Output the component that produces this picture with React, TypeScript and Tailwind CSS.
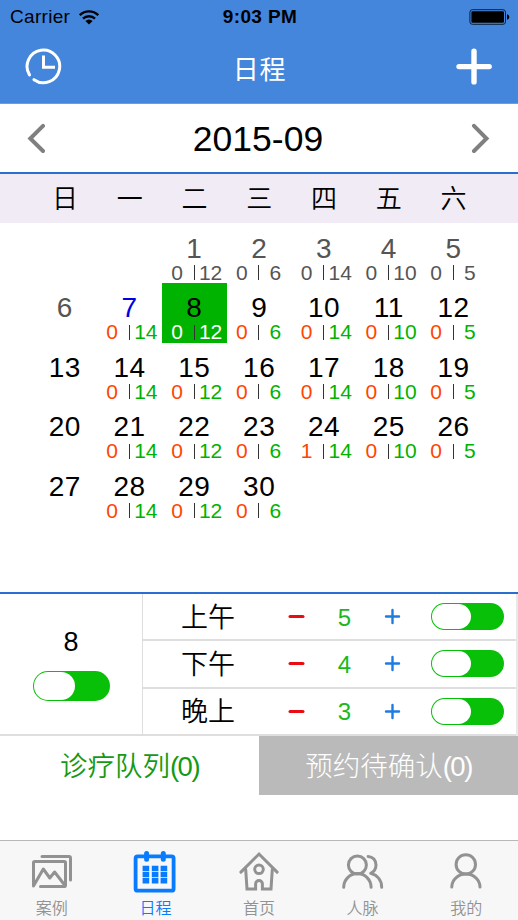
import clsx from "clsx";
import type { ReactNode } from "react";

type Day = {
  day: number;
  tone?: "past" | "today" | "selected";
  booked?: number;
  total?: number;
};

const weekdays = ["日", "一", "二", "三", "四", "五", "六"];

// Daily capacity, Sunday to Saturday. Sunday has no appointments.
const capacity = [0, 14, 12, 6, 14, 10, 5];

// September 2015 starts on a Tuesday.
const days: (Day | null)[] = [
  null,
  null,
  ...Array.from({ length: 30 }, (_, i): Day => {
    const day = i + 1;
    const total = capacity[(i + 2) % 7];
    return {
      day,
      tone: day < 7 ? "past" : day === 7 ? "today" : day === 8 ? "selected" : undefined,
      booked: day === 24 ? 1 : 0,
      total: total || undefined,
    };
  }),
];

const periods = [
  { label: "上午", count: 5 },
  { label: "下午", count: 4 },
  { label: "晚上", count: 3 },
];

function StatusBar() {
  return (
    <div className="grid h-[34px] grid-cols-3 items-center pr-2 pl-[10px] text-black">
      <div className="flex items-center gap-[9px]">
        <span className="text-[19px] tracking-[0.3px]">Carrier</span>
        <svg width="20" height="15" viewBox="0 0 20 15" fill="none" stroke="#000" strokeWidth="2.4">
          <path d="M0.8 5.2a13 13 0 0 1 18.4 0" />
          <path d="M4 8.7a8.5 8.5 0 0 1 12 0" />
          <path d="M10 14.4 6.4 11a5 5 0 0 1 7.2 0z" fill="#000" stroke="none" />
        </svg>
      </div>
      <span className="text-center text-[19px] font-bold tracking-[0.35px]">9:03 PM</span>
      <svg className="justify-self-end" width="41" height="16" viewBox="0 0 41 16">
        <rect x="0.9" y="0.7" width="35.6" height="14.6" rx="2.5" fill="none" stroke="#0b2038" />
        <rect x="2.4" y="2.2" width="32.6" height="11.6" rx="1.2" />
        <path d="M38 5.3c3 .6 3 4.8 0 5.4z" />
      </svg>
    </div>
  );
}

function Header() {
  return (
    <header className="h-[104px] border-b border-[#8b98aa] bg-[#4486dc]">
      <StatusBar />
      <div className="flex h-16 items-center justify-between px-[25px]">
        <svg width="37" height="37" viewBox="0 0 37 37" fill="none" stroke="#fff" strokeWidth="3" strokeLinecap="round">
          <path d="M9 31.7A16.3 16.3 0 1 0 4.5 26.9" />
          <path d="M18.5 9v10.3h10" strokeLinecap="square" />
        </svg>
        <h1 className="pt-[7px] pl-px text-[26px] leading-none tracking-[0.8px] text-white">日程</h1>
        <svg width="37" height="37" viewBox="0 0 37 37" stroke="#fff" strokeWidth="5.4" strokeLinecap="round">
          <path d="M18 3.3v30.6M3 18.6h30.2" />
        </svg>
      </div>
    </header>
  );
}

function MonthPicker() {
  return (
    <div className="flex h-[70px] items-center justify-between border-b-2 border-[#2a6fd0] pr-7 pl-[26px]">
      <svg width="19" height="31" viewBox="0 0 19 31" fill="none" stroke="#808080" strokeWidth="4" strokeLinecap="round">
        <path d="M17 2.8 4.3 15.5 17 28" />
      </svg>
      <h2 className="pt-[3px] text-[35.5px] leading-none text-black">2015-09</h2>
      <svg width="19" height="31" viewBox="0 0 19 31" fill="none" stroke="#808080" strokeWidth="4" strokeLinecap="round">
        <path d="M3 2.8 15.5 15.5 3 28" />
      </svg>
    </div>
  );
}

function DayCell({ day, tone, booked, total }: Day) {
  return (
    <div className={clsx("h-[59.6px] pt-[11px]", tone === "selected" && "bg-[#00b300]")}>
      <div
        className={clsx(
          "text-center text-[28px] leading-[28px] tracking-[0.5px]",
          tone === "past" ? "text-[#555]" : tone === "today" ? "text-[#0000e6]" : "text-black",
        )}
      >
        {day}
      </div>
      {total && (
        <div className="flex h-5 items-center pl-px text-[21px] leading-5">
          <span
            className={clsx(
              "w-[29.5px] text-center",
              tone === "past" ? "text-[#555]" : tone === "selected" ? "text-white" : "text-[#ff4500]",
            )}
          >
            {booked}
          </span>
          <span className="ml-[2.5px] h-[15px] w-px bg-[#333]" />
          <span
            className={clsx(
              "w-[34px] text-center",
              tone === "past" ? "text-[#555]" : tone === "selected" ? "text-white" : "text-[#00b300]",
            )}
          >
            {total}
          </span>
        </div>
      )}
    </div>
  );
}

function Calendar() {
  return (
    <section className="h-[418px]">
      <div className="grid h-[49px] grid-cols-7 items-center bg-[#f1ebf6] pt-0.5 pr-8 pl-[32.5px] text-center text-[26px] font-[350] text-black">
        {weekdays.map((name) => (
          <span key={name}>{name}</span>
        ))}
      </div>
      <div className="grid grid-cols-7 pt-[0.6px] pr-[32px] pl-[32.4px]">
        {days.map((d, i) => (d ? <DayCell key={i} {...d} /> : <span key={i} />))}
      </div>
    </section>
  );
}

function Toggle({ large }: { large?: boolean }) {
  return (
    <div
      className={clsx(
        "flex rounded-full bg-[#08c008] p-px",
        large ? "h-[30px] w-[77px]" : "h-[27px] w-[73px]",
      )}
    >
      <div className={clsx("h-full rounded-full bg-white", large ? "w-[41px]" : "w-[39px]")} />
    </div>
  );
}

function PeriodRow({ label, count }: { label: string; count: number }) {
  return (
    <div className="flex flex-1 items-center border-b-2 border-[#dedede] pr-3 pl-[38px]">
      <span className="w-[107px] pt-[3px] text-[27px] leading-none font-[350] text-black">{label}</span>
      <svg width="17" height="17" viewBox="0 0 17 17" stroke="#e80d12" strokeWidth="3" strokeLinecap="round">
        <path d="M2 8.5h13" />
      </svg>
      <span className="w-[79px] pt-0.5 text-center text-[24px] leading-none text-[#1cb81c]">{count}</span>
      <svg width="17" height="17" viewBox="0 0 17 17" stroke="#1e7be0" strokeWidth="2.4" strokeLinecap="round">
        <path d="M8.5 2v13M2 8.5h13" />
      </svg>
      <div className="ml-auto">
        <Toggle />
      </div>
    </div>
  );
}

function DaySettings() {
  return (
    <section className="flex h-[144px] border-t-2 border-[#2a6fd0]">
      <div className="flex w-[143px] flex-col items-center border-r border-b-2 border-[#dedede] pt-[34px]">
        <span className="text-[27px] leading-[28px] text-black">8</span>
        <div className="mt-[15px]">
          <Toggle large />
        </div>
      </div>
      <div className="flex flex-1 flex-col border-r-2 border-[#e8e8e8]">
        {periods.map((p) => (
          <PeriodRow key={p.label} {...p} />
        ))}
      </div>
    </section>
  );
}

function QueueTabs() {
  return (
    <div className="grid h-[59px] grid-cols-2 text-[27.5px] font-[350]">
      <button className="pt-0.5 text-[#149a14]">
        诊疗队列<span className="tracking-[-1.5px]">(0)</span>
      </button>
      <button className="bg-[#bababa] pt-0.5 font-light text-white">
        预约待确认<span className="tracking-[-1.5px]">(0)</span>
      </button>
    </div>
  );
}

function NavItem({ label, active, children }: { label: string; active?: boolean; children: ReactNode }) {
  return (
    <a className={clsx("flex flex-col items-center pt-[9px]", active ? "text-[#087bff]" : "text-[#929292]")}>
      <svg
        width="44"
        height="44"
        viewBox="0 0 44 44"
        fill="none"
        stroke="currentColor"
        strokeWidth="3"
        strokeLinecap="round"
        strokeLinejoin="round"
      >
        {children}
      </svg>
      <span className="mt-[6px] text-[16px] leading-[18px] font-[350]">{label}</span>
    </a>
  );
}

function NavBar() {
  return (
    <nav className="mt-auto grid h-20 grid-cols-5 border-t border-[#b8b8b8] bg-[#f7f7f7]">
      <NavItem label="案例">
        <path d="M12 6.5h27q1.5 0 1.5 1.5v22" />
        <path d="M10.5 36.5h23.7q1.3 0 1.3-1.3V12.8q0-1.3-1.3-1.3H4.8q-1.3 0-1.3 1.3V36l9.8-17 6.5 9 4.8-6L35 35.5" />
      </NavItem>
      <NavItem label="日程" active>
        <rect x="2.6" y="6.3" width="38" height="34.4" rx="2" strokeWidth="3.8" />
        <path d="M13.6 3.5v5.7M30.3 3.5v5.7" strokeWidth="5" />
        {[15.7, 21.8, 28].map((y) => (
          <path key={y} d={`M9.6 ${y}h6.6v5.4h-6.6zM18.8 ${y}h6.6v5.4h-6.6zM27.6 ${y}h6.6v5.4h-6.6z`} fill="currentColor" stroke="none" />
        ))}
      </NavItem>
      <NavItem label="首页">
        <path d="M3.9 22.1 22 4l18.1 18.1" strokeLinejoin="miter" />
        <path d="M8.7 19.5 10 39h8.6v-5a3.4 3.4 0 0 1 6.8 0v5H34l1.3-19.5" strokeLinejoin="miter" />
        <circle cx="22" cy="19.3" r="4.3" />
      </NavItem>
      <NavItem label="人脉">
        <circle cx="16.4" cy="15" r="9" />
        <path d="M2.7 37.3a13.7 13.7 0 0 1 27.4 0" />
        <path d="M27.1 6.4C32 6.6 35 10.5 35 15s-2.6 7-5.3 8.3c6.3 1.7 11 6.7 11 14" />
      </NavItem>
      <NavItem label="我的">
        <circle cx="21.8" cy="14.4" r="9.7" />
        <path d="M7.8 37a14.1 13 0 0 1 28.2 0" />
      </NavItem>
    </nav>
  );
}

export default function App() {
  return (
    <main className="flex h-[920px] w-[518px] flex-col overflow-hidden bg-white font-['Liberation_Sans','Noto_Sans_CJK_SC',sans-serif]">
      <Header />
      <MonthPicker />
      <Calendar />
      <DaySettings />
      <QueueTabs />
      <NavBar />
    </main>
  );
}
